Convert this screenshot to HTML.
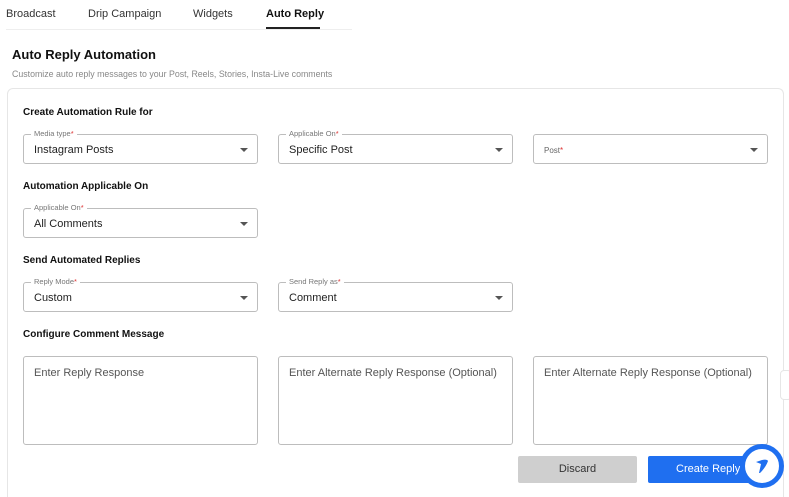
<!DOCTYPE html>
<html style="width:789px;height:497px;overflow:hidden"><head><style>
*{box-sizing:border-box;margin:0;padding:0}
body{width:789px;height:497px;background:#fff;font-family:"Liberation Sans",sans-serif;position:relative;overflow:hidden;color:#222}
.a{position:absolute}
.tab{position:absolute;top:8px;font-size:11px;color:#333}
.f{position:absolute;height:30px;border:1px solid #bdbdbd;border-radius:3px;font-size:11px;color:#222;padding:9px 0 0 10px}
.f .l{position:absolute;top:-6px;left:7px;background:#fff;padding:0 3px;font-size:7.5px;color:#777}
.f .l b{color:#d33;font-weight:normal}
.f .c{position:absolute;right:9px;top:13px;width:0;height:0;border-left:4px solid transparent;border-right:4px solid transparent;border-top:4px solid #555}
.h{position:absolute;left:23px;font-size:10px;font-weight:bold;color:#111}
.t{position:absolute;top:356px;height:89px;width:235px;border:1px solid #bdbdbd;border-radius:3px;font-size:11px;color:#555;padding:10px 0 0 10px}
</style></head><body>
<div class="tab" style="left:6px">Broadcast</div>
<div class="tab" style="left:88px">Drip Campaign</div>
<div class="tab" style="left:193px">Widgets</div>
<div class="tab" style="left:266px;color:#111;font-weight:bold">Auto Reply</div>
<div class="a" style="left:266px;top:27px;width:54px;height:2px;background:#222"></div>
<div class="a" style="left:6px;top:29px;width:346px;height:1px;background:#eee"></div>
<div class="a" style="left:12px;top:47px;font-size:13px;font-weight:bold;color:#111">Auto Reply Automation</div>
<div class="a" style="left:12px;top:69px;font-size:8.8px;color:#888">Customize auto reply messages to your Post, Reels, Stories, Insta-Live comments</div>
<div class="a" style="left:7px;top:88px;width:777px;height:409px;border:1px solid #e6e6e6;border-bottom:none;border-radius:6px 6px 0 0"></div>
<div class="h" style="top:107px">Create Automation Rule for</div>
<div class="f" style="left:23px;top:134px;width:235px"><span class="l">Media type<b>*</b></span>Instagram Posts<i class="c"></i></div>
<div class="f" style="left:278px;top:134px;width:235px"><span class="l">Applicable On<b>*</b></span>Specific Post<i class="c"></i></div>
<div class="f" style="left:533px;top:134px;width:235px;font-size:8px;color:#666;padding-top:11px">Post<b style="color:#d33;font-weight:normal">*</b><i class="c"></i></div>
<div class="h" style="top:181px">Automation Applicable On</div>
<div class="f" style="left:23px;top:208px;width:235px"><span class="l">Applicable On<b>*</b></span>All Comments<i class="c"></i></div>
<div class="h" style="top:255px">Send Automated Replies</div>
<div class="f" style="left:23px;top:282px;width:235px"><span class="l">Reply Mode<b>*</b></span>Custom<i class="c"></i></div>
<div class="f" style="left:278px;top:282px;width:235px"><span class="l">Send Reply as<b>*</b></span>Comment<i class="c"></i></div>
<div class="h" style="top:329px">Configure Comment Message</div>
<div class="t" style="left:23px">Enter Reply Response</div>
<div class="t" style="left:278px">Enter Alternate Reply Response (Optional)</div>
<div class="t" style="left:533px">Enter Alternate Reply Response (Optional)</div>
<div class="a" style="left:518px;top:456px;width:119px;height:27px;background:#cfcfcf;border-radius:2px;font-size:11px;text-align:center;line-height:27px;color:#333">Discard</div>
<div class="a" style="left:648px;top:456px;width:122px;height:27px;background:#1f6ff0;border-radius:2px;font-size:11px;line-height:27px;color:#fff;padding-left:28px">Create Reply</div>
<div class="a" style="left:740px;top:444px;width:44px;height:44px;border-radius:50%;background:#fff;border:5px solid #1f6ff0"></div>
<svg class="a" style="left:752px;top:456px" width="20" height="20" viewBox="0 0 20 20"><path d="M4 6 L10 4 Q15 3 16 5 Q14 11 8 17 L7 17 L9 8 Z" fill="#1f6ff0"/></svg>
<div class="a" style="left:780px;top:370px;width:12px;height:30px;border:1px solid #e6e6e6;border-radius:4px;background:#fff"></div>
</body></html>
